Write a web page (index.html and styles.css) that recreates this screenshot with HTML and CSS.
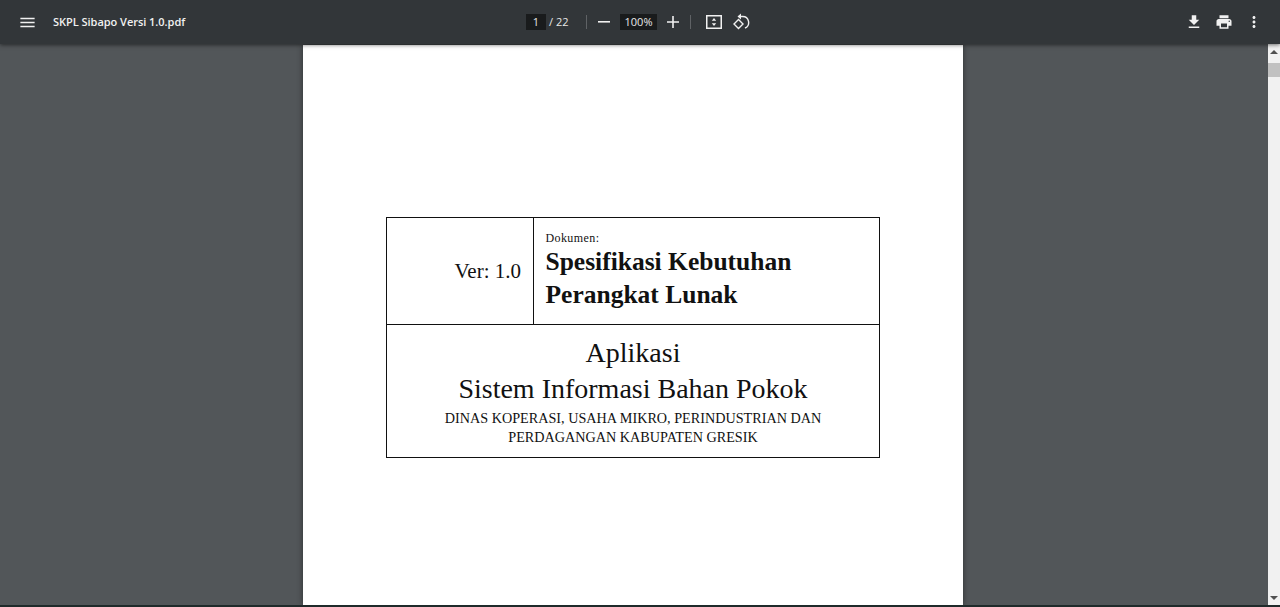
FILE: index.html
```html
<!DOCTYPE html>
<html lang="id">
<head>
<meta charset="utf-8">
<title>SKPL Sibapo Versi 1.0.pdf</title>
<link rel="stylesheet" href="styles.css">
</head>
<body>
<header class="toolbar">
  <div class="left">
    <svg class="icon menu" viewBox="0 0 24 24" width="19" height="19"><path d="M3 18h18v-2H3v2zm0-5h18v-2H3v2zm0-7v2h18V6H3z"/></svg>
    <span class="title">SKPL Sibapo Versi 1.0.pdf</span>
  </div>
  <div class="center">
    <span class="pagebox">1</span>
    <span class="pagetotal">/ 22</span>
    <span class="sep sep-a"></span>
    <svg class="icon minus" viewBox="0 0 12 12" width="12" height="12"><path d="M0 5h12v1.6H0z"/></svg>
    <span class="zoombox">100%</span>
    <svg class="icon plus" viewBox="0 0 12 12" width="12" height="12"><path d="M0 5.2h5.2V0h1.6v5.2H12v1.6H6.800v5.200H5.200V6.800H0z"/></svg>
    <span class="sep sep-b"></span>
    <svg class="icon fit" viewBox="0 0 16 14" width="16" height="14"><path fill-rule="evenodd" d="M0 0h16v14H0zM1.500 1.500v11h13v-11z"/><path d="M8 3l2.200 2.800H5.800zM8 11L5.800 8.200h4.400z"/></svg>
    <svg class="icon rotate" viewBox="0 0 18 18" width="18" height="18"><path class="line" d="M8 3.500H10.500A6 6 0 0 1 13 15"/><path d="M9 0.500v6L5.500 3.500z"/><path class="line" d="M6.500 6.500L2 11l4.500 4.500L11 11z"/></svg>
  </div>
  <div class="right">
    <svg class="icon" viewBox="0 0 24 24" width="18" height="18"><path d="M19 9h-4V3H9v6H5l7 7 7-7zM5 18v2h14v-2H5z"/></svg>
    <svg class="icon" viewBox="0 0 24 24" width="18" height="18"><path d="M19 8H5c-1.660 0-3 1.340-3 3v6h4v4h12v-4h4v-6c0-1.660-1.340-3-3-3zm-3 11H8v-5h8v5zm3-7c-.55 0-1-.45-1-1s.45-1 1-1 1 .45 1 1-.45 1-1 1zm-1-9H6v4h12V3z"/></svg>
    <svg class="icon" viewBox="0 0 24 24" width="18" height="18"><path d="M12 8c1.100 0 2-.9 2-2s-.9-2-2-2-2 .9-2 2 .9 2 2 2zm0 2c-1.100 0-2 .9-2 2s.9 2 2 2 2-.9 2-2-.9-2-2-2zm0 6c-1.100 0-2 .9-2 2s.9 2 2 2 2-.9 2-2-.9-2-2-2z"/></svg>
  </div>
</header>
<div class="workspace">
  <main class="viewer">
    <article class="page">
      <div class="doc-table">
        <div class="ver">Ver: 1.0</div>
        <div class="doc">
          <div class="doc-label">Dokumen:</div>
          <div class="doc-title">Spesifikasi Kebutuhan<br>Perangkat Lunak</div>
        </div>
        <div class="app">
          <div class="app-line">Aplikasi</div>
          <div class="app-line">Sistem Informasi Bahan Pokok</div>
          <div class="org">DINAS KOPERASI, USAHA MIKRO, PERINDUSTRIAN DAN<br>PERDAGANGAN KABUPATEN GRESIK</div>
        </div>
      </div>
    </article>
  </main>
  <aside class="scrollbar">
    <span class="arrow up"></span>
    <span class="thumb"></span>
    <span class="track"></span>
    <span class="arrow down"></span>
  </aside>
</div>
<div class="baseline"></div>
</body>
</html>
```
FILE: styles.css
```css
* { box-sizing: border-box; }
html, body { height: 100%; }
body {
  margin: 0;
  display: flex;
  flex-direction: column;
  overflow: hidden;
  background: #525659;
  font-family: "Open Sans", "Noto Sans", sans-serif;
}
.toolbar {
  position: relative;
  z-index: 2;
  flex: 0 0 44px;
  height: 44px;
  display: flex;
  align-items: center;
  justify-content: space-between;
  background: #323639;
  color: #f1f1f1;
  box-shadow: 0 1px 4px rgba(0,0,0,.55);
}
.icon { display: block; flex: none; fill: #f1f1f1; }
.left { display: flex; align-items: center; width: 300px; padding-left: 18px; }
.title { margin-left: 16px; padding-bottom: 1px; font-size: 11px; font-weight: 600; letter-spacing: -.03px; white-space: nowrap; }
.center { display: flex; align-items: center; font-size: 11px; color: #e8e8e8; width: 240px; margin-left: 12px; }
.pagebox, .zoombox {
  display: flex; align-items: center; justify-content: center;
  height: 16px; padding-bottom: 1px; background: #191b1c;
}
.pagebox { width: 20px; }
.pagetotal { margin-left: 3px; width: 37px; padding-bottom: 1px; }
.sep { width: 1px; height: 14px; background: #5f6265; }
.minus { margin-left: 11px; }
.zoombox { width: 37px; margin-left: 10px; }
.plus { margin-left: 10px; }
.sep-b { margin-left: 11px; }
.fit { margin-left: 15px; }
.rotate { margin-left: 10px; }
.line { fill: none; stroke: #f1f1f1; stroke-width: 1.400; }
.right { display: flex; align-items: center; gap: 12px; width: 300px; justify-content: flex-end; padding-right: 17px; }
.workspace { flex: 1; display: flex; min-height: 0; }
.viewer { flex: 1; min-width: 0; display: flex; justify-content: center; padding-right: 2px; background: #525659; overflow: hidden; }
.page {
  width: 660px;
  margin-top: 1px;
  padding: 172px 83px 0;
  background: #fff;
  box-shadow: 0 0 6px rgba(0,0,0,.45);
  color: #111;
  font-family: "Liberation Serif", "Noto Serif", serif;
}
.doc-table {
  display: grid;
  grid-template-columns: 147px 1fr;
  width: 494px;
  border: 1px solid #111;
}
.ver {
  display: flex; align-items: center; justify-content: flex-end;
  height: 107px;
  padding-right: 12px;
  font-size: 21px;
  border-right: 1px solid #111;
  border-bottom: 1px solid #111;
}
.doc { padding: 13px 12px 0 11.500px; border-bottom: 1px solid #111; }
.doc-label { font-size: 12px; line-height: 15px; letter-spacing: .4px; }
.doc-title { font-size: 25.500px; font-weight: 700; line-height: 33px; margin-top: -1px; }
.app { grid-column: 1 / -1; height: 132px; padding-top: 10px; text-align: center; }
.app-line { font-size: 28px; line-height: 36px; }
.org { font-size: 14.200px; line-height: 19px; margin-top: 2px; }
.scrollbar { flex: 0 0 12px; display: flex; flex-direction: column; align-items: center; background: #f1f1f1; padding-top: 6px; }
.arrow { width: 0; height: 0; border-left: 4px solid transparent; border-right: 4px solid transparent; }
.arrow.up { border-bottom: 4px solid #505050; }
.arrow.down { border-top: 4px solid #505050; margin-bottom: 5px; }
.thumb { width: 12px; height: 14px; margin-top: 9px; background: #c1c1c1; }
.track { flex: 1; }
.baseline { flex: 0 0 2px; background: #1f2a2a; }
```
